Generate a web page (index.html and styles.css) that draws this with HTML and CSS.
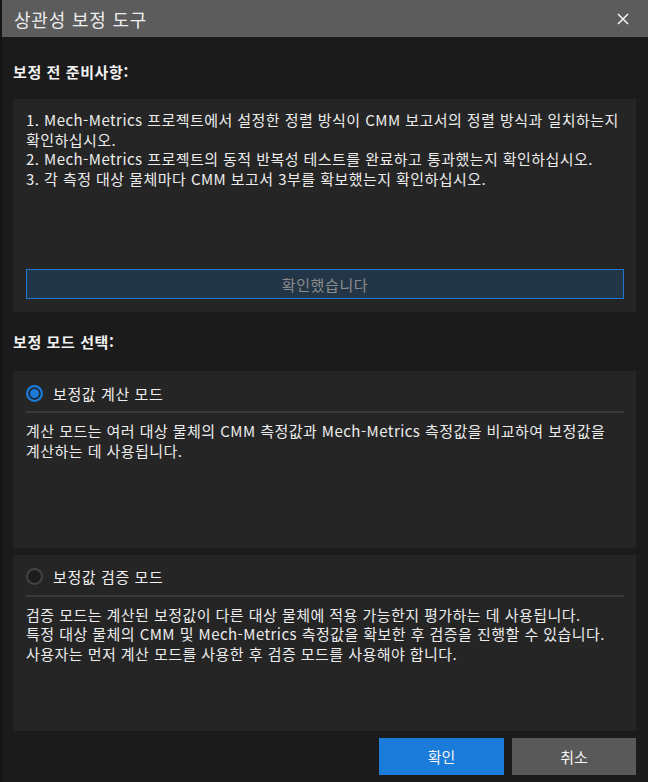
FILE: index.html
```html
<!DOCTYPE html>
<html lang="ko">
<head>
    <meta charset="utf-8">
    <link rel="stylesheet" href="styles.css">
    <title>상관성 보정 도구</title>
</head>
<body>
    <div class="dialog">
        <div class="title-bar">
            <span class="title">상관성 보정 도구</span>
            <button class="close-btn" aria-label="닫기">
                <svg width="12" height="12" viewBox="0 0 12 12">
                    <path d="M1 1 L11 11 M11 1 L1 11" stroke="#f0f0f0" stroke-width="1.6" fill="none"/>
                </svg>
            </button>
        </div>
        <div class="content">
            <h2 class="section-title first">보정 전 준비사항:</h2>
            <div class="panel prep-panel">
                <p class="panel-text">1. Mech-Metrics 프로젝트에서 설정한 정렬 방식이 CMM 보고서의 정렬 방식과 일치하는지 확인하십시오.<br>2. Mech-Metrics 프로젝트의 동적 반복성 테스트를 완료하고 통과했는지 확인하십시오.<br>3. 각 측정 대상 물체마다 CMM 보고서 3부를 확보했는지 확인하십시오.</p>
                <button class="confirm-check">확인했습니다</button>
            </div>

            <h2 class="section-title">보정 모드 선택:</h2>
            <div class="panel mode-panel">
                <label class="mode-row">
                    <span class="radio checked"></span>
                    <span class="mode-name">보정값 계산 모드</span>
                </label>
                <hr class="divider">
                <p class="panel-text">계산 모드는 여러 대상 물체의 CMM 측정값과 Mech-Metrics 측정값을 비교하여 보정값을 계산하는 데 사용됩니다.</p>
            </div>
            <div class="panel mode-panel">
                <label class="mode-row">
                    <span class="radio"></span>
                    <span class="mode-name">보정값 검증 모드</span>
                </label>
                <hr class="divider">
                <p class="panel-text">검증 모드는 계산된 보정값이 다른 대상 물체에 적용 가능한지 평가하는 데 사용됩니다.<br>특정 대상 물체의 CMM 및 Mech-Metrics 측정값을 확보한 후 검증을 진행할 수 있습니다.<br>사용자는 먼저 계산 모드를 사용한 후 검증 모드를 사용해야 합니다.</p>
            </div>
        </div>
        <div class="footer">
            <button class="btn btn-primary">확인</button>
            <button class="btn btn-secondary">취소</button>
        </div>
    </div>
</body>
</html>
```

FILE: styles.css
```css
html, body {
    margin: 0;
    height: 100%;
}
body {
    background-color: #141414;
    padding-left: 2px;
    box-sizing: border-box;
    font-family: "Noto Sans CJK KR", "Noto Sans", sans-serif;
    color: #e8e8e8;
    word-break: keep-all;
    overflow: hidden;
}
.dialog {
    background-color: #1b1b1b;
    height: 100%;
    display: flex;
    flex-direction: column;
}
.title-bar {
    height: 37px;
    flex-shrink: 0;
    background-color: #5c5c5c;
    display: flex;
    align-items: center;
    justify-content: space-between;
    padding: 0 19px 0 12px;
}
.title {
    font-size: 18px;
    letter-spacing: 0.8px;
    color: #ececec;
}
.close-btn {
    background: none;
    border: none;
    padding: 0;
    width: 12px;
    height: 12px;
    display: flex;
}
.content {
    flex: 1;
    display: flex;
    flex-direction: column;
    padding: 0 12px 0 11px;
}
.section-title {
    margin: 20px 0 19px 0;
    font-size: 15px;
    font-weight: bold;
    line-height: 20px;
    letter-spacing: 0.6px;
    color: #f2f2f2;
}
.section-title.first {
    margin: 25px 0 17px 0;
}
.panel {
    background-color: #252525;
    padding: 0 12px 0 13px;
    display: flex;
    flex-direction: column;
}
.panel-text {
    margin: 0;
    font-size: 15px;
    line-height: 19.5px;
    letter-spacing: 0.45px;
    color: #ececec;
}
.prep-panel {
    height: 213px;
    box-sizing: border-box;
    padding-top: 11px;
    padding-bottom: 13px;
}
.confirm-check {
    margin-top: auto;
    height: 30px;
    background-color: #233647;
    border: 1px solid #1e78d2;
    color: #8c8c8c;
    font-family: inherit;
    font-size: 15px;
    letter-spacing: 0.6px;
}
.mode-panel {
    flex: 1;
}
.mode-panel + .mode-panel {
    margin-top: 7px;
}
.mode-row {
    display: flex;
    align-items: center;
    gap: 10px;
    height: 20px;
    margin-top: 12px;
}
.radio {
    width: 17px;
    height: 17px;
    box-sizing: border-box;
    border-radius: 50%;
    border: 2px solid #444444;
    background-color: #1c1c1c;
}
.radio.checked {
    border-color: #1a7bd9;
    background-color: #1a7bd9;
    box-shadow: inset 0 0 0 2px #202a36;
}
.mode-name {
    font-size: 15px;
    letter-spacing: 0.6px;
    color: #f0f0f0;
}
.divider {
    border: none;
    height: 2px;
    background-color: #3a3a3a;
    margin: 8px 0 8px 0;
}
.footer {
    flex-shrink: 0;
    display: flex;
    justify-content: flex-end;
    gap: 8px;
    padding: 7px 12px 7px 0;
}
.btn {
    width: 125px;
    height: 37px;
    border: none;
    font-family: inherit;
    font-size: 15px;
    color: #f4f4f4;
}
.btn-primary {
    background-color: #1a7bd9;
}
.btn-secondary {
    width: 124px;
    background-color: #595959;
}
```
